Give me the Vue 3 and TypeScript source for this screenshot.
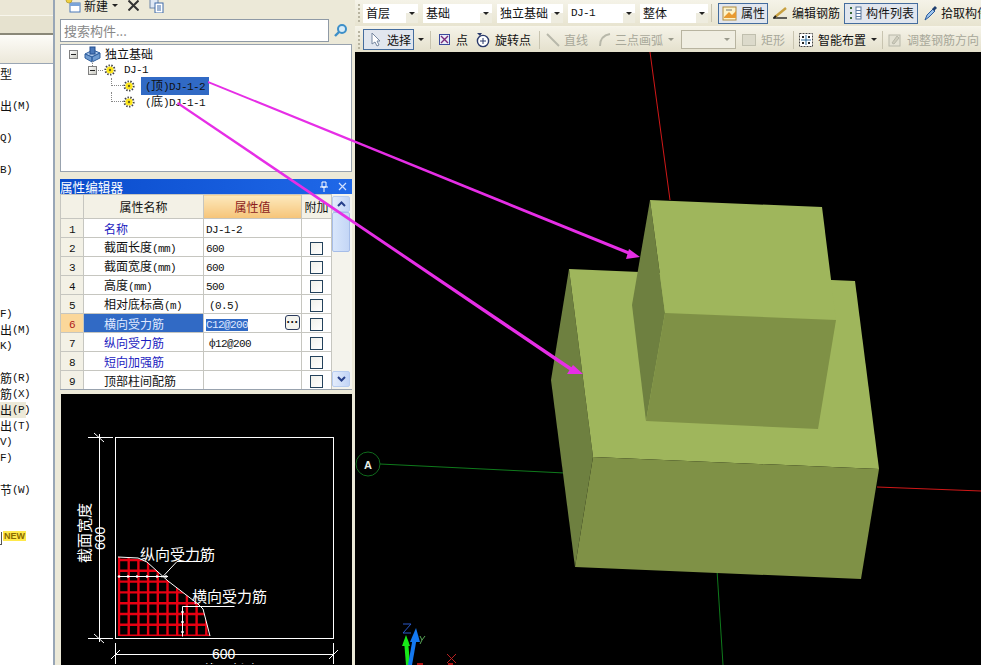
<template>
  <div class="app">
    <!-- 左侧导航，只露出一小段 -->
    <aside class="nav">
      <div class="nav-top"></div>
      <div class="nav-btn"></div>
      <div class="nav-head"></div>
      <ul class="nav-list">
        <li v-for="(row, i) in navRows" :key="i" :class="{ on: row[0] === '出' && row[1] === '(P)' }">
          <span v-if="row[0]">{{ row[0] }}</span><span class="m">{{ row[1] }}</span>
          <span v-if="row[2]" class="new-box"></span><span v-if="row[2]" class="new-tag">NEW</span>
        </li>
      </ul>
    </aside>

    <!-- 构件列表 + 属性编辑器 -->
    <section class="mid">
      <div class="mid-bar">
        <svg width="17" height="17" viewBox="0 0 17 17" class="new-icon">
          <rect x="5" y="6" width="10" height="9" fill="#fff" stroke="#4a78b8" />
          <rect x="5" y="6" width="10" height="3" fill="#7aa3d8" />
          <circle cx="4" cy="3" r="3" fill="#f0d040" stroke="#a08a20" stroke-width="0.6" />
        </svg>
        <span class="mid-label">新建</span>
        <span class="arrow dark ml4"></span>
        <svg width="11" height="11" viewBox="0 0 11 11" class="ml10">
          <path d="M0.5 0.5l10 10M10.5 0.5l-10 10" stroke="#333" stroke-width="2" />
        </svg>
        <svg width="15" height="14" viewBox="0 0 15 14" class="ml10">
          <rect x="1" y="0" width="8" height="9" fill="#dfe8f4" stroke="#6c86a8" />
          <rect x="6" y="4" width="8" height="10" fill="#fff" stroke="#3f6aa8" />
          <path d="M8 7h4M8 9h4M8 11h4" stroke="#3f6aa8" />
        </svg>
      </div>

      <div class="search">
        <div class="search-input">搜索构件...</div>
        <div class="search-btn">
          <svg width="15" height="15" viewBox="0 0 15 15">
            <circle cx="9" cy="6" r="4" fill="#d8ecf8" stroke="#3d8fc8" stroke-width="2" />
            <path d="M6 9l-4 4" stroke="#3d8fc8" stroke-width="2.4" />
          </svg>
        </div>
      </div>

      <div class="tree">
        <div class="tree-row">
          <span class="toggle"></span>
          <svg width="17" height="17" viewBox="0 0 17 17" class="ml6">
            <path d="M1 8l8-4 7 3-8 4z" fill="#a8c4e8" stroke="#2f5f9f" />
            <path d="M1 8v4l7 4v-5zM8 11v5l8-4V7z" fill="#6f9bd0" stroke="#2f5f9f" />
            <rect x="6" y="1" width="5" height="7" fill="#4a78b8" stroke="#234f8f" />
          </svg>
          <span class="ml4">独立基础</span>
        </div>
        <div class="tree-row lv1">
          <span class="toggle"></span>
          <span class="dash"></span>
          <svg class="gear" viewBox="0 0 12 12">
            <circle cx="6" cy="6" r="4.6" fill="none" stroke="#444" stroke-width="2" stroke-dasharray="1.4 1.4" />
            <circle cx="6" cy="6" r="3.6" fill="#ffe81a" />
            <circle cx="6" cy="6" r="1.2" fill="#6b6420" />
          </svg>
          <span class="m ml8">DJ-1</span>
        </div>
        <div v-for="(leaf, i) in leaves" :key="leaf.name" class="tree-row lv2">
          <span class="elbow" :class="{ long: i > 0 }"></span>
          <svg class="gear" viewBox="0 0 12 12">
            <circle cx="6" cy="6" r="4.6" fill="none" stroke="#444" stroke-width="2" stroke-dasharray="1.4 1.4" />
            <circle cx="6" cy="6" r="3.6" fill="#ffe81a" />
            <circle cx="6" cy="6" r="1.2" fill="#6b6420" />
          </svg>
          <span class="leaf" :class="{ sel: leaf.selected }"><span class="m">(</span>{{ leaf.side }}<span class="m">){{ leaf.name }}</span></span>
        </div>
      </div>

      <div class="prop-title">
        <span>属性编辑器</span>
        <svg width="10" height="11" viewBox="0 0 10 11" class="pin">
          <path d="M3 1h4v5H3zM1 6h8M5 6v5" stroke="#fff" fill="none" />
        </svg>
        <svg width="9" height="9" viewBox="0 0 9 9" class="close">
          <path d="M1 1l7 7M8 1L1 8" stroke="#cfe0ff" stroke-width="1.2" />
        </svg>
      </div>

      <div class="prop-panel">
        <table class="prop">
          <thead>
            <tr>
              <th class="c-idx"></th>
              <th class="c-name">属性名称</th>
              <th class="c-val">属性值</th>
              <th class="c-add">附加</th>
            </tr>
          </thead>
          <tbody>
            <tr v-for="(p, i) in props" :key="p.name" :class="{ active: p.active }">
              <td class="idx"><span class="m">{{ i + 1 }}</span></td>
              <td class="name" :class="{ blue: p.blue }">{{ p.name }}<span v-if="p.unit" class="m"> {{ p.unit }}</span></td>
              <td class="val">
                <span class="m" :class="{ picked: p.active, pad: p.pad }">{{ p.value }}</span>
                <span v-if="p.active" class="dots">···</span>
              </td>
              <td class="add"><span v-if="i > 0" class="check"></span></td>
            </tr>
          </tbody>
        </table>
        <div class="scroll">
          <span class="sb-btn">
            <svg width="9" height="6" viewBox="0 0 9 6"><path d="M1 5l3.5-3.5L8 5" fill="none" stroke="#27408b" stroke-width="2" /></svg>
          </span>
          <span class="sb-thumb"></span>
          <span class="sb-btn end">
            <svg width="9" height="6" viewBox="0 0 9 6"><path d="M1 1l3.5 3.5L8 1" fill="none" stroke="#27408b" stroke-width="2" /></svg>
          </span>
        </div>
      </div>

      <!-- 配筋示意图 -->
      <div class="sketch">
        <svg width="291" height="270" viewBox="61 395 291 270">
          <defs>
            <clipPath id="hatch">
              <polygon points="118,558 138,560 147,563 168,582 198,605 203,610 210,637 118,637" />
            </clipPath>
          </defs>
          <g clip-path="url(#hatch)" stroke="#e60012" stroke-width="2.4">
            <line v-for="x in hatchX" :key="'x' + x" :x1="x" y1="555" :x2="x" y2="640" />
            <line v-for="y in hatchY" :key="'y' + y" x1="115" :y1="y" x2="215" :y2="y" />
          </g>
          <g stroke="#fff" fill="none">
            <rect x="115.5" y="438.5" width="218" height="201" />
            <path d="M88 438.5h25M88 639.5h25M99.5 435v208M94 434l10 9M94 635l10 9" />
            <path d="M115.5 644v21M333.5 644v21M115 655.5h219M111 660l9-9M329 660l9-9" />
            <path d="M118 558l20 1 9 4 21 19 30 23 5 5 7 27" />
            <path d="M118 577.5h50M177 562.5h25M177 562.5l-15 16M182.5 607.5h52M182.5 607.5v30" />
          </g>
          <g fill="#fff">
            <circle v-for="x in dotX" :key="'d' + x" :cx="x" cy="577.5" r="1.3" />
            <circle v-for="y in dotY" :key="'e' + y" cx="182.5" :cy="y" r="1.3" />
          </g>
          <g class="cad" fill="#fff">
            <text x="140" y="561" textLength="75">纵向受力筋</text>
            <text x="192" y="603" textLength="75">横向受力筋</text>
            <text class="cad-m" x="212" y="660">600</text>
            <text x="202" y="677" textLength="58">截面长度</text>
            <text transform="translate(90 564) rotate(-90)" textLength="60">截面宽度</text>
            <text class="cad-m" transform="translate(105 551) rotate(-90)">600</text>
          </g>
        </svg>
      </div>
    </section>

    <!-- 绘图区 -->
    <main class="work">
      <div class="tb">
        <span class="grip"></span>
        <div class="combos">
          <div v-for="c in combos" :key="c.text" class="combo" :style="{ width: c.width + 'px' }">
            <span :class="{ m: c.mono }">{{ c.text }}</span>
            <i class="combo-arrow"><span class="arrow dark"></span></i>
          </div>
        </div>
        <span class="sep ml3"></span>
        <div class="btn on ml6 w-attr">
          <svg width="16" height="15" viewBox="0 0 16 15">
            <rect x="1" y="1" width="13" height="13" fill="#fdf3c8" stroke="#b08a40" />
            <path d="M2 11l5-5 3 3 4-4v7H2z" fill="#e89a30" />
            <path d="M4 4h6" stroke="#777" />
          </svg>
          <span>属性</span>
        </div>
        <div class="item ml4">
          <svg width="16" height="14" viewBox="0 0 16 14">
            <path d="M1 12h14" stroke="#222" stroke-width="1.4" />
            <path d="M3 11L14 2" stroke="#c8a040" stroke-width="2.4" />
            <path d="M2 12l2-2" stroke="#222" stroke-width="2" />
          </svg>
          <span>编辑钢筋</span>
        </div>
        <div class="btn on ml4 w-list">
          <svg width="13" height="14" viewBox="0 0 13 14">
            <path d="M1 2h2M1 7h2M1 12h2" stroke="#3a6a3a" stroke-width="2" />
            <rect x="7" y="1" width="5" height="12" fill="#fff" stroke="#5a78a0" />
            <path d="M7 4.5h5M7 7.5h5M7 10.5h5" stroke="#5a78a0" />
          </svg>
          <span class="ml1">构件列表</span>
        </div>
        <div class="item ml6 g3">
          <svg width="14" height="16" viewBox="0 0 14 16">
            <path d="M1 15l2-5 6-6 2 2-6 6z" fill="#9cc4ec" stroke="#2a5a9c" />
            <path d="M8 4l3-3 2 2-3 3z" fill="#1f3f6f" />
          </svg>
          <span>拾取构件</span>
        </div>
      </div>

      <div class="tb second">
        <span class="grip"></span>
        <div class="btn on w-select">
          <svg width="12" height="15" viewBox="0 0 12 15">
            <path d="M2 1v11l3-2 2 4 2-1-2-4h3z" fill="#fff" stroke="#7788a0" />
          </svg>
          <span>选择</span>
        </div>
        <span class="arrow dark ml4"></span>
        <span class="sep ml6"></span>
        <div class="item ml8 g6">
          <svg width="11" height="11" viewBox="0 0 11 11">
            <rect x="0.5" y="0.5" width="10" height="10" fill="#e8ecf8" stroke="#3a4a9c" />
            <path d="M2 2l7 7M9 2L2 9" stroke="#7a2a7a" stroke-width="1.4" />
          </svg>
          <span>点</span>
        </div>
        <div class="item ml8 g5">
          <svg width="14" height="16" viewBox="0 0 14 16">
            <circle cx="7" cy="9" r="5.6" fill="#fff" stroke="#2a3a6c" stroke-width="1.4" />
            <path d="M7 6v6M4 9h6" stroke="#2a3a6c" />
            <path d="M1 1h5l-2 3z" fill="#2a3a6c" />
          </svg>
          <span>旋转点</span>
        </div>
        <span class="sep ml8"></span>
        <div class="item off ml6">
          <svg width="14" height="14" viewBox="0 0 14 14"><path d="M1 1l12 12" stroke="#b8b8aa" stroke-width="2" /></svg>
          <span>直线</span>
        </div>
        <div class="item off ml10">
          <svg width="13" height="14" viewBox="0 0 13 14"><path d="M2 13C2 6 6 2 12 1" fill="none" stroke="#b8b8aa" stroke-width="2" /></svg>
          <span>三点画弧</span>
        </div>
        <span class="arrow ml5"></span>
        <div class="blank ml7"><span class="arrow"></span></div>
        <div class="item off ml5">
          <span class="rect-icon"></span>
          <span>矩形</span>
        </div>
        <span class="sep ml8"></span>
        <div class="item ml5 g5">
          <svg width="14" height="14" viewBox="0 0 14 14">
            <rect x="0.5" y="0.5" width="13" height="13" fill="#fff" stroke="#444" stroke-dasharray="2 1" />
            <path d="M7 2v10M2 7h10" stroke="#2a6a9c" />
            <path d="M3 3h2v2H3zM9 9h2v2H9zM9 3h2v2H9zM3 9h2v2H3z" fill="#222" />
          </svg>
          <span>智能布置</span>
        </div>
        <span class="arrow dark ml5"></span>
        <span class="sep ml5"></span>
        <div class="item off ml5 g5">
          <svg width="14" height="15" viewBox="0 0 14 15">
            <rect x="1" y="3" width="11" height="11" fill="#e4e2d4" stroke="#b8b8aa" />
            <path d="M4 11l5-7 2 2-5 6z" fill="#cfcdbd" stroke="#b8b8aa" />
          </svg>
          <span>调整钢筋方向</span>
        </div>
      </div>

      <div class="view">
        <svg width="626" height="613" viewBox="355 52 626 613">
          <g fill="none" stroke-width="1">
            <path d="M650 52L670 200" stroke="#d01818" />
            <path d="M877 487L981 491" stroke="#d01818" />
            <path d="M380 464L565 473" stroke="#0f7a1c" />
            <path d="M717 570L723 665" stroke="#0f7a1c" />
            <circle cx="368" cy="464" r="12" stroke="#0f6a1c" />
          </g>
          <text class="axis-a" x="364" y="469">A</text>

          <polygon points="569,269 593,457 575,567 551,380" fill="#6e8040" />
          <polygon points="569,269 855,281 879,469 593,457" fill="#9fb65c" />
          <polygon points="593,457 879,469 861,579 575,567" fill="#7f9146" />
          <polygon points="650,200 665,313 646,421 632,305" fill="#6e8040" />
          <polygon points="650,200 822,207 836,320 665,313" fill="#9fb65c" />
          <polygon points="665,313 836,320 818,429 646,421" fill="#7f9146" />

          <g class="triad">
            <path d="M408 665L406 640" stroke="#18e818" stroke-width="4" />
            <polygon points="406,635 402,646 410,646" fill="#18e818" />
            <path d="M410 665L415 637" stroke="#1478f0" stroke-width="4" />
            <polygon points="416,628 410,642 420,642" fill="#1478f0" />
            <path d="M417 664h6M448 664h5" stroke="#e81818" stroke-width="1.5" />
            <path d="M403 624h8l-8 9h8" stroke="#2a58c8" fill="none" />
            <path d="M420 636l2 4 3-4M422 640l-2 4" stroke="#58a858" fill="none" />
            <path d="M447 654l9 9M456 654l-9 9" stroke="#b82020" fill="none" />
          </g>
        </svg>
      </div>
    </main>

    <!-- 标注箭头盖在最上层 -->
    <svg class="marks" width="981" height="665" viewBox="0 0 981 665">
      <g fill="#e62ee6">
        <polygon points="208,81 208,83 632,256 633,253" />
        <polygon points="640,257 629,249 626,259" />
        <polygon points="178,102 177,104 575,374 577,371" />
        <polygon points="583,374 573,365 567,374" />
      </g>
    </svg>
  </div>
</template>

<script setup lang="ts">
interface PropRow {
  name: string
  unit?: string
  value: string
  blue?: boolean
  active?: boolean
  pad?: boolean
}

// [中文, 西文, 是否带 NEW]
const navRows: [string, string, boolean?][] = [
  ['型', ''], ['', ''], ['出', '(M)'], ['', ''], ['', 'Q)'], ['', ''], ['', 'B)'],
  ['', ''], ['', ''], ['', ''], ['', ''], ['', ''], ['', ''], ['', ''], ['', ''],
  ['', 'F)'], ['出', '(M)'], ['', 'K)'], ['', ''], ['筋', '(R)'], ['筋', '(X)'],
  ['出', '(P)'], ['出', '(T)'], ['', 'V)'], ['', 'F)'], ['', ''], ['节', '(W)'],
  ['', ''], ['', ''], ['', '', true]
]

const leaves = [
  { side: '顶', name: 'DJ-1-2', selected: true },
  { side: '底', name: 'DJ-1-1', selected: false }
]

const props: PropRow[] = [
  { name: '名称', value: 'DJ-1-2', blue: true },
  { name: '截面长度', unit: '(mm)', value: '600' },
  { name: '截面宽度', unit: '(mm)', value: '600' },
  { name: '高度', unit: '(mm)', value: '500' },
  { name: '相对底标高', unit: '(m)', value: '(0.5)', pad: true },
  { name: '横向受力筋', value: 'C12@200', active: true },
  { name: '纵向受力筋', value: 'ф12@200', blue: true, pad: true },
  { name: '短向加强筋', value: '', blue: true },
  { name: '顶部柱间配筋', value: '' }
]

const combos = [
  { text: '首层', width: 55 },
  { text: '基础', width: 69 },
  { text: '独立基础', width: 66 },
  { text: 'DJ-1', width: 67, mono: true },
  { text: '整体', width: 68 }
]

// 配筋网格
const hatchX = Array.from({ length: 11 }, (_, i) => 119 + i * 9.7)
const hatchY = Array.from({ length: 8 }, (_, i) => 561 + i * 10.8)
const dotX = [119, 128, 137, 147, 157, 166]
const dotY = [613, 623, 633]
</script>

<style>
html,
body {
  margin: 0;
  background: #ece9d8;
  overflow: hidden;
}
</style>

<style scoped>
.app {
  position: relative;
  display: flex;
  width: 981px;
  height: 665px;
  overflow: hidden;
  background: #ece9d8;
  color: #111;
  font: 12px/16px "Noto Sans CJK SC", "Liberation Sans", sans-serif;
}

.m {
  font-family: "Liberation Mono", monospace;
  font-size: 11px;
  letter-spacing: -0.6px;
}

.ml1 { margin-left: 1px; }
.ml3 { margin-left: 3px; }
.ml4 { margin-left: 4px; }
.ml5 { margin-left: 5px; }
.ml6 { margin-left: 6px; }
.ml7 { margin-left: 7px; }
.ml8 { margin-left: 8px; }
.ml10 { margin-left: 10px; }

/* 左侧 */
.nav {
  flex: none;
  display: flex;
  flex-direction: column;
  width: 55px;
  border-right: 2px solid #98a6b6;
  box-sizing: border-box;
}

.nav-top {
  height: 15px;
  background: #ebe7d6;
}

.nav-btn {
  height: 20px;
  background: #e6e2cf;
  border-bottom: 2px solid #8a8878;
  border-top: 1px solid #f8f6ec;
  box-sizing: border-box;
}

.nav-head {
  height: 29px;
  background: linear-gradient(#fdfcf8, #ece8da);
  border-bottom: 1px solid #9aa6b4;
  box-sizing: border-box;
}

.nav-list {
  flex: 1;
  margin: 0;
  padding: 2px 0 0;
  list-style: none;
  background: #fff;
}

.nav-list li {
  display: flex;
  align-items: center;
  height: 16px;
  white-space: nowrap;
}

.nav-list li.on {
  background: linear-gradient(90deg, #ece9d8 26px, #fff 26px);
}

.new-box {
  width: 1px;
  height: 12px;
  border-right: 1px solid #555;
  border-bottom: 1px solid #555;
}

.new-tag {
  margin: -4px 0 0 1px;
  padding: 0 1px;
  background: #ffe94a;
  color: #8a6a00;
  font: bold 9px/10px "Liberation Sans", sans-serif;
}

/* 中间 */
.mid {
  flex: none;
  display: flex;
  flex-direction: column;
  width: 300px;
  padding: 0 3px 0 5px;
  box-sizing: border-box;
}

.mid-bar {
  display: flex;
  align-items: center;
  flex: none;
  height: 11px;
  margin-bottom: 8px;
  padding-left: 5px;
}

.mid-label {
  margin-left: 2px;
}

.arrow {
  display: inline-block;
  width: 0;
  height: 0;
  border: 3px solid transparent;
  border-top: 3px solid #9a9a8c;
  border-bottom: 0;
}

.arrow.dark {
  border-top-color: #222;
}

.search {
  flex: none;
  display: flex;
  height: 23px;
  margin-bottom: 2px;
}

.search-input {
  width: 264px;
  padding-left: 3px;
  background: #fff;
  border: 1px solid #8f9aa6;
  color: #888;
  font-size: 13px;
  line-height: 21px;
}

.search-btn {
  flex: 1;
  display: flex;
  align-items: center;
  justify-content: center;
}

.tree {
  flex: none;
  height: 128px;
  padding: 1px 0 0 8px;
  box-sizing: border-box;
  background: #fff;
  border: 1px solid #98a2ae;
}

.tree-row {
  display: flex;
  align-items: center;
  height: 16px;
  font-size: 12px;
}

.toggle {
  position: relative;
  flex: none;
  width: 9px;
  height: 9px;
  box-sizing: border-box;
  background: linear-gradient(135deg, #fff, #c8c8c0);
  border: 1px solid #808080;
}

.toggle::after {
  content: "";
  position: absolute;
  left: 1px;
  top: 3px;
  width: 5px;
  height: 1px;
  background: #222;
}

.lv1 {
  padding-left: 19px;
}

.lv1 .toggle::before {
  content: "";
  position: absolute;
  left: 3px;
  top: -6px;
  height: 5px;
  border-left: 1px dotted #888;
}

.lv2 {
  padding-left: 42px;
}

.dash {
  flex: none;
  width: 5px;
  margin: 0 1px;
  border-top: 1px dotted #888;
}

.gear {
  flex: none;
  width: 12px;
  height: 12px;
}

.elbow {
  flex: none;
  align-self: flex-start;
  width: 12px;
  height: 8px;
  border-left: 1px dotted #888;
  border-bottom: 1px dotted #888;
  box-sizing: border-box;
}

.elbow.long {
  height: 10px;
  margin-top: -2px;
}

.leaf {
  margin-left: 6px;
  padding: 0 4px;
}

.leaf.sel {
  background: #316ac5;
  color: #111;
}

.prop-title {
  flex: none;
  display: flex;
  align-items: center;
  height: 15px;
  margin-top: 7px;
  padding-right: 5px;
  background: linear-gradient(90deg, #0a4ccc, #1f68e8);
  color: #fff;
  font-size: 12.6px;
  line-height: 15px;
}

.pin {
  margin-left: auto;
}

.close {
  margin-left: 9px;
}

.prop-panel {
  flex: none;
  display: flex;
  height: 196px;
  overflow: hidden;
  background: #fff;
  border-bottom: 1px solid #98a2ae;
  box-sizing: border-box;
}

.prop {
  flex: none;
  align-self: flex-start;
  width: 272px;
  table-layout: fixed;
  border-collapse: collapse;
  font-size: 12px;
}

.prop th,
.prop td {
  box-sizing: border-box;
  padding: 0;
  border: 1px solid #c6c6c0;
  font-weight: 400;
  overflow: hidden;
  white-space: nowrap;
}

.prop th {
  height: 24px;
  background: #f3f1e6;
}

.c-idx { width: 23px; }
.c-name { width: 120px; }
.c-val { width: 98px; }

.prop th.c-val {
  background: linear-gradient(#fce9bd, #f6c478);
  color: #8c1c1c;
}

.prop td {
  height: 19px;
  padding-top: 1px;
  line-height: 14px;
}

.idx {
  background: #f3f1e6;
  text-align: center;
}

.prop .name {
  padding-left: 20px;
}

.name.blue {
  color: #1c1cc0;
}

.prop .val {
  position: relative;
  padding-left: 2px;
}

.pad {
  padding-left: 3px;
}

.add {
  text-align: center;
}

.active .idx {
  background: #fbd79a;
  color: #b01818;
}

.active .name {
  background: #316ac5;
  color: #dfe8ff;
}

.picked {
  background: #316ac5;
  color: #dfe8ff;
  padding: 0;
}

.dots {
  position: absolute;
  right: 1px;
  top: 1px;
  width: 15px;
  height: 15px;
  box-sizing: border-box;
  background: #f4f4ee;
  border: 1px solid #2a3a5c;
  border-radius: 3px;
  font: bold 12px/13px "Liberation Sans", sans-serif;
  text-align: center;
}

.check {
  display: block;
  width: 13px;
  height: 13px;
  margin: 1px auto 0;
  background: linear-gradient(135deg, #f0f0ea, #fff);
  border: 1px solid #24425c;
  box-sizing: border-box;
}

.scroll {
  flex: 1;
  display: flex;
  flex-direction: column;
  padding: 2px 2px 0 0;
  background: #f4f3ec;
}

.sb-btn {
  flex: none;
  display: flex;
  align-items: center;
  justify-content: center;
  height: 16px;
  background: linear-gradient(90deg, #e4edfc, #c2d4f6);
  border: 1px solid #b8cdf0;
  border-radius: 2px;
  box-sizing: border-box;
}

.sb-btn.end {
  margin-top: auto;
  margin-bottom: 2px;
}

.sb-thumb {
  flex: none;
  height: 40px;
  background: linear-gradient(90deg, #d8e6fb, #c4d6f6);
  border: 1px solid #a6bde8;
  border-radius: 2px;
  box-sizing: border-box;
}

.sketch {
  flex: 1;
  margin: 4px 0 0 1px;
  background: #000;
  overflow: hidden;
}

.sketch svg {
  display: block;
}

.cad text {
  font-family: "Noto Sans CJK SC", sans-serif;
  font-size: 15px;
}

.cad .cad-m {
  font-family: "Liberation Sans", sans-serif;
  font-size: 14px;
}

/* 右侧 */
.work {
  flex: 1;
  display: flex;
  flex-direction: column;
  min-width: 0;
  background: #000;
}

.tb {
  flex: none;
  display: flex;
  align-items: center;
  height: 26px;
  padding-left: 3px;
  background: linear-gradient(#f5f3e8, #e8e4d0);
  white-space: nowrap;
  overflow: hidden;
}

.second {
  border-top: 1px solid #f7f5ea;
  box-sizing: border-box;
  background: linear-gradient(#f5f3e8, #e4e0cc);
}

.grip {
  flex: none;
  width: 2px;
  height: 18px;
  margin-right: 3px;
  background: repeating-linear-gradient(#b8b4a0 0 2px, transparent 2px 4px);
}

.combos {
  display: flex;
  gap: 5px;
}

.combo {
  display: flex;
  align-items: center;
  justify-content: space-between;
  height: 19px;
  padding-left: 3px;
  background: #fff;
  box-sizing: border-box;
}

.combo-arrow {
  display: flex;
  align-items: center;
  justify-content: center;
  width: 12px;
  height: 19px;
  background: linear-gradient(#fff 45%, #eeecdf 45%);
}

.sep {
  flex: none;
  width: 1px;
  height: 18px;
  background: #c8c4b0;
}

.btn {
  flex: none;
  display: flex;
  align-items: center;
  gap: 3px;
  height: 21px;
  box-sizing: border-box;
}

.btn.on {
  background: #e1e6ee;
  border: 1px solid #456d9e;
}

.w-attr {
  width: 50px;
  padding-left: 3px;
}

.w-list {
  width: 74px;
  padding-left: 4px;
}

.w-select {
  width: 51px;
  padding-left: 6px;
  gap: 5px;
}

.item {
  flex: none;
  display: flex;
  align-items: center;
  gap: 4px;
}

.g3 { gap: 3px; }
.g5 { gap: 5px; }
.g6 { gap: 6px; }

.off {
  color: #a8a89a;
}

.blank {
  flex: none;
  display: flex;
  align-items: center;
  justify-content: flex-end;
  width: 55px;
  height: 19px;
  padding-right: 5px;
  background: #f0eee2;
  border: 1px solid #b8b4a0;
  box-sizing: border-box;
}

.rect-icon {
  width: 12px;
  height: 10px;
  margin: 0 1px;
  background: #dcdacb;
  border: 1px solid #c0bfae;
}

.view {
  flex: 1;
  overflow: hidden;
  background: #000;
}

.view svg {
  display: block;
}

.axis-a {
  fill: #e8eee8;
  font: bold 11px "Liberation Sans", sans-serif;
}

.marks {
  position: absolute;
  left: 0;
  top: 0;
  pointer-events: none;
}
</style>
